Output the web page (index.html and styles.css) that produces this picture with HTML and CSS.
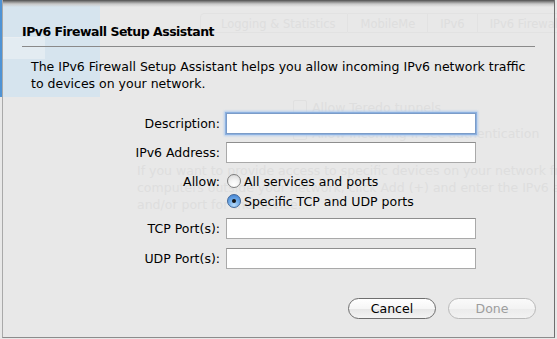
FILE: index.html
```html
<!DOCTYPE html>
<html>
<head>
<meta charset="utf-8">
<link rel="stylesheet" href="styles.css">
</head>
<body>
<div class="stage">
  <div class="ghost">
    <div class="ghost-top">
      <div class="ghost-side">
        <div class="ghost-side-item"></div>
      </div>
      <div class="ghost-tabs">
        <span class="ghost-tab first">Logging &amp; Statistics</span>
        <span class="ghost-tab">MobileMe</span>
        <span class="ghost-tab">IPv6</span>
        <span class="ghost-tab">IPv6 Firewall</span>
      </div>
    </div>
    <div class="ghost-checks">
      <div class="ghost-check"><span class="ghost-box"></span>Allow Teredo tunnels</div>
      <div class="ghost-check"><span class="ghost-box"></span>Allow incoming IPSec authentication</div>
    </div>
    <p class="ghost-text">If you want to provide access to specific devices on your network from<br>computers outside your network, click Add (+) and enter the IPv6 address<br>and/or port for the device.</p>
  </div>

  <div class="sheet">
    <h1 class="title">IPv6 Firewall Setup Assistant</h1>
    <div class="rule"></div>
    <p class="intro">The IPv6 Firewall Setup Assistant helps you allow incoming IPv6 network traffic<br>to devices on your network.</p>

    <div class="form">
      <div class="row row-desc">
        <label class="label">Description:</label>
        <div class="field focused"></div>
      </div>
      <div class="row row-addr">
        <label class="label">IPv6 Address:</label>
        <div class="field"></div>
      </div>
      <div class="row row-radio first-radio">
        <label class="label">Allow:</label>
        <div class="radio-opt"><span class="radio"></span>All services and ports</div>
      </div>
      <div class="row row-radio">
        <span class="label"></span>
        <div class="radio-opt"><span class="radio on"></span>Specific TCP and UDP ports</div>
      </div>
      <div class="row row-tcp">
        <label class="label">TCP Port(s):</label>
        <div class="field"></div>
      </div>
      <div class="row row-udp">
        <label class="label">UDP Port(s):</label>
        <div class="field"></div>
      </div>
    </div>

    <div class="buttons">
      <button class="btn">Cancel</button>
      <button class="btn disabled">Done</button>
    </div>
  </div>
</div>
</body>
</html>
```

FILE: styles.css
```css
* { box-sizing: border-box; }
html, body {
  margin: 0;
  padding: 0;
}
body {
  width: 557px;
  height: 339px;
  overflow: hidden;
  background: #e8e8e8;
  font-family: "DejaVu Sans", sans-serif;
  font-size: 12.5px;
  color: #000;
}
.stage {
  display: grid;
  width: 557px;
  height: 339px;
  overflow: hidden;
}
.ghost, .sheet {
  grid-area: 1 / 1;
}

/* ghost window underneath */
.ghost {
  display: flex;
  flex-direction: column;
  background: #e8e8e8;
  color: #dedede;
  overflow: hidden;
  width: 557px;
  height: 339px;
}
.ghost-top {
  display: flex;
  height: 97px;
  flex: none;
}
.ghost-side {
  width: 100px;
  flex: none;
  background: #d6e4ee;
  border-left: 3px solid #4f93d4;
  padding-top: 37px;
}
.ghost-side-item {
  width: 42px;
  height: 22px;
  background: #e3ecf2;
  border-top: 1px solid #e9eef2;
}
.ghost-tabs {
  display: flex;
  padding-top: 13px;
  margin-left: 100px;
  height: 33px;
  font-size: 11.5px;
  overflow: hidden;
  min-width: 0;
}
.ghost-tab {
  padding: 2px 12px;
  line-height: 16px;
  border: 1px solid #e2e2e2;
  border-left: none;
  white-space: nowrap;
}
.ghost-tab.first {
  border-left: 1px solid #e2e2e2;
  border-radius: 4px 0 0 4px;
  padding-left: 20px;
}
.ghost-checks {
  padding-left: 293px;
  margin-top: 3px;
}
.ghost-check {
  display: flex;
  align-items: center;
  height: 14px;
  margin-bottom: 12px;
  gap: 5px;
  font-size: 12.5px;
  white-space: nowrap;
}
.ghost-box {
  width: 14px;
  height: 14px;
  flex: none;
  border: 1px solid #e0e0e0;
  border-radius: 2px;
}
.ghost-text {
  margin: 10px 0 0 137px;
  line-height: 17px;
  font-size: 12.5px;
  white-space: nowrap;
}

/* the sheet */
.sheet {
  margin-left: 2px;
  width: 553px;
  height: 338px;
  border-left: 1px solid #a9a9a9;
  border-right: 1px solid #6e6e6e;
  border-bottom: 1px solid #8c8c8c;
  background: linear-gradient(to bottom, #4e4e4e 0, #8e8e8e 2px, #c9c9c9 4px, rgba(232,232,232,0) 7px);
  padding: 24px 0 0 19px;
  display: flex;
  flex-direction: column;
}
.title {
  margin: 0;
  font-size: 12.5px;
  font-weight: bold;
  letter-spacing: -0.5px;
  line-height: 16px;
}
.rule {
  margin-top: 6px;
  width: 513px;
  height: 1px;
  background: #8a8a8a;
}
.intro {
  margin: 11px 0 0 9px;
  line-height: 17px;
  white-space: nowrap;
}

.form {
  display: flex;
  flex-direction: column;
  margin-top: 21px;
}
.row {
  display: flex;
  align-items: center;
  gap: 6px;
}
.label {
  width: 198px;
  text-align: right;
  white-space: nowrap;
}
.field {
  width: 250px;
  height: 21px;
  background: #fff;
  border: 1px solid #a9a9a9;
  border-top-color: #8e8e8e;
}
.field.focused {
  border-color: #7b9cc8;
  box-shadow: 0 0 0 1px #8db1e0, 0 0 2px 2px #b3cdee;
}
.row-addr { margin-top: 8px; }
.row-radio { height: 20px; }
.first-radio { margin-top: 8px; }
.row-tcp { margin-top: 7px; }
.row-udp { margin-top: 9px; }

.radio-opt {
  display: flex;
  align-items: center;
  gap: 3px;
  padding-left: 1px;
  white-space: nowrap;
}
.radio {
  width: 14px;
  height: 14px;
  border-radius: 50%;
  border: 1px solid #7d7d7d;
  background: radial-gradient(circle at 50% 80%, #ffffff 0, #f4f4f4 40%, #d4d4d4 100%);
  display: flex;
  align-items: center;
  justify-content: center;
}
.radio.on {
  border-color: #43699a;
  background: radial-gradient(circle at 50% 85%, #b9dcfb 0, #73aee9 45%, #3b7bd0 100%);
}
.radio.on::after {
  content: "";
  width: 4px;
  height: 4px;
  border-radius: 50%;
  background: #141414;
}

.buttons {
  display: flex;
  justify-content: flex-end;
  gap: 12px;
  width: 514px;
  margin-top: 29px;
}
.btn {
  width: 88px;
  height: 21px;
  border-radius: 11px;
  border: 1px solid #6e6e6e;
  background: linear-gradient(to bottom, #ffffff 0, #f6f6f6 50%, #e6e6e6 51%, #f4f4f4 100%);
  font-family: "DejaVu Sans", sans-serif;
  font-size: 12.5px;
  color: #000;
  padding: 0;
  line-height: 19px;
}
.btn.disabled {
  border-color: #b9b9b9;
  color: #9d9d9d;
  background: linear-gradient(to bottom, #fafafa 0, #f3f3f3 50%, #ebebeb 51%, #f2f2f2 100%);
}
```
